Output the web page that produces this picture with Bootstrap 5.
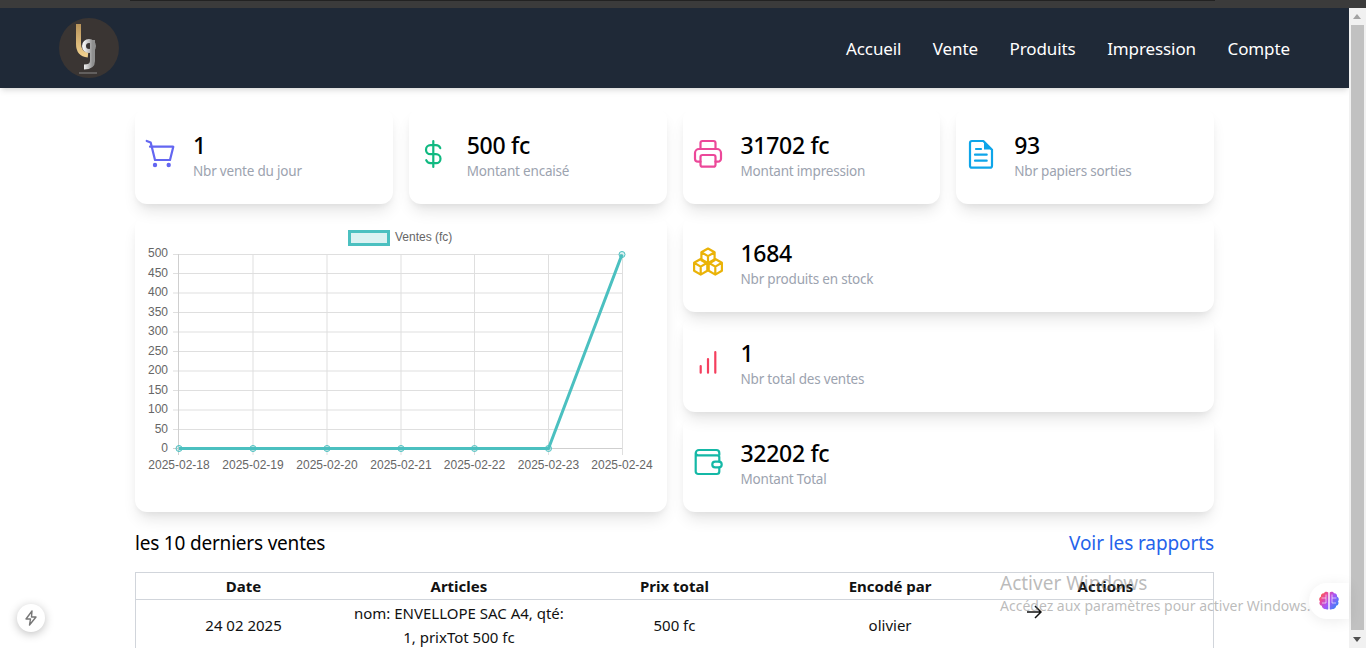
<!DOCTYPE html>
<html lang="fr">
<head>
    <meta charset="UTF-8">
    <meta name="viewport" content="width=device-width, initial-scale=1.0">
    <title>Tableau de bord</title>
    <link href="https://cdn.jsdelivr.net/npm/bootstrap@5.3.0/dist/css/bootstrap.min.css" rel="stylesheet">
    <style>
        html, body { height: 100%; overflow: hidden; }
        body { font-family: "Noto Sans", "Open Sans", sans-serif; color: #000; background: #fff; }
        .top-strip { height: 8px; background: #3b3b3b; }
        .top-strip div { height: 1px; margin: 0 151px 0 130px; background: #222; }
        .shell { height: 640px; }
        .page { width: 1349px; height: 640px; overflow: hidden; }
        .app-nav { height: 80px; padding: 0 59px; background: #1f2937; box-shadow: 0 4px 6px -1px rgba(0,0,0,.1), 0 2px 4px -2px rgba(0,0,0,.1); }
        .app-nav .navbar-brand { padding: 0; margin: 0; }
        .app-nav .nav-link { padding: 1px 0 0; font-size: 17px; letter-spacing: -.1px; line-height: 28px; color: #fff; }
        .app-nav .navbar-nav { gap: 31.5px; }
        .content { width: 1079px; margin: 20px auto 0; }
        .stat-card { height: 96px; padding-left: 10px; border: 0; border-radius: 12px; background: #fff; box-shadow: 0 10px 15px -3px rgba(0,0,0,.1), 0 4px 6px -2px rgba(0,0,0,.05); }
        .stat-card svg { flex: none; width: 30px; height: 30px; overflow: visible; }
        .stat-card svg * { fill: none; stroke-width: 2.2; stroke-linecap: round; stroke-linejoin: round; }
        .stat-card svg .solid { fill: currentColor; stroke: none; }
        .stat-text { margin-left: 18px; }
        .stat-num { font-size: 23px; letter-spacing: -.3px; line-height: 32px; font-weight: 500; margin-top: -2px; }
        .stat-label { font-size: 13.5px; letter-spacing: -.2px; line-height: 20px; color: #9ca3af; }
        /* upper cards keep their shadow over the card below */
        .row-top { position: relative; z-index: 4; margin-bottom: 12px; }
        .stack .stat-card { position: relative; }
        .stack .stat-card:nth-child(1) { z-index: 3; }
        .stack .stat-card:nth-child(2) { z-index: 2; }
        .stack .stat-card:nth-child(3) { z-index: 1; }
        .chart-card { height: 296px; border-radius: 12px; background: #fff; box-shadow: 0 10px 15px -3px rgba(0,0,0,.1), 0 4px 6px -2px rgba(0,0,0,.05); }
        .chart-card svg { display: block; }
        .chart-card text { font-family: "Liberation Sans", Arial, sans-serif; font-size: 12px; fill: #666; }
        .grid-line { stroke: #dfdfdf; stroke-width: 1; }
        .table-head { margin-top: 17px; height: 28px; margin-bottom: 15px; position: relative; }
        .table-head span { font-size: 19px; letter-spacing: -.2px; }
        .table-head a { font-size: 19px; letter-spacing: -.1px; color: #2563eb; text-decoration: none; }
        .sales { table-layout: fixed; width: 1079px; margin: 0; border: 1px solid #d1d5db; color: #111; }
        .sales th, .sales td { padding: 0 1px; text-align: center; vertical-align: middle; font-size: 15px; line-height: 24px; border: 0; }
        .sales th { height: 27px; font-weight: 700; border-bottom: 1px solid #d1d5db; }
        .sales td { height: 50px; }
        .sales td.action-cell { text-align: left; vertical-align: top; padding: 0 0 0 28px; }
        .action-cell svg { display: block; margin-top: 4px; }
        .scrollbar { width: 17px; height: 640px; background: #f1f1f1; padding: 0 2px; }
        .scrollbar .thumb { height: 605px; background: #c1c1c1; margin: 17px 0 0; }
        .arrow-up, .arrow-down { position: absolute; left: 4px; width: 0; height: 0; border-left: 4.5px solid transparent; border-right: 4.5px solid transparent; }
        .arrow-up { top: 6px; border-bottom: 5px solid #a3a3a3; }
        .arrow-down { bottom: 6px; border-top: 5px solid #505050; }
        .watermark { position: absolute; left: 1000px; top: 570px; color: rgba(120,120,120,.5); pointer-events: none; z-index: 5; }
        .watermark .big { font-size: 19px; line-height: 27px; }
        .watermark .small { font-size: 14px; line-height: 18px; white-space: nowrap; }
        .fab-left { position: absolute; left: 17px; top: 604px; width: 28px; height: 28px; background: #fff; box-shadow: 0 2px 10px rgba(0,0,0,.25); }
        .fab-right { position: absolute; left: 1309px; top: 583px; width: 40px; height: 36px; border-radius: 18px 0 0 18px; background: #fff; box-shadow: 0 2px 14px rgba(0,0,0,.08); z-index: 6; }
    </style>
</head>
<body class="position-relative">
    <div class="top-strip"><div></div></div>
    <div class="shell d-flex">
        <div class="page">
            <!-- Navigation -->
            <nav class="navbar app-nav flex-nowrap justify-content-between">
                <a class="navbar-brand" href="#">
                    <svg width="60" height="60" viewBox="0 0 60 60">
                        <defs>
                            <linearGradient id="gold" x1="0" y1="0" x2="0" y2="1"><stop offset="0" stop-color="#b8935a"/><stop offset="1" stop-color="#f0cf8c"/></linearGradient>
                            <linearGradient id="silver" x1="0" y1="0" x2="1" y2="0"><stop offset="0" stop-color="#f2f2f2"/><stop offset="1" stop-color="#8f8f8f"/></linearGradient>
                        </defs>
                        <circle cx="30" cy="30" r="30" fill="#3a3533"/>
                        <path d="M19.5 6V26Q19.5 36 29 37" fill="none" stroke="url(#gold)" stroke-width="5"/>
                        <circle cx="30" cy="28" r="5" fill="none" stroke="url(#silver)" stroke-width="4"/>
                        <path d="M33.5 22V43Q33.5 49 25 49" fill="none" stroke="url(#silver)" stroke-width="5"/>
                        <path d="M20 55H38" stroke="#8a8a8a" stroke-width="1"/>
                    </svg>
                </a>
                <ul class="navbar-nav flex-row">
                    <li class="nav-item"><a class="nav-link" href="#">Accueil</a></li>
                    <li class="nav-item"><a class="nav-link" href="#">Vente</a></li>
                    <li class="nav-item"><a class="nav-link" href="#">Produits</a></li>
                    <li class="nav-item"><a class="nav-link" href="#">Impression</a></li>
                    <li class="nav-item"><a class="nav-link" href="#">Compte</a></li>
                </ul>
            </nav>

            <div class="content">
                <!-- Top stats -->
                <div class="row g-3 row-top">
                    <div class="col-6">
                        <div class="row g-3">
                            <div class="col-6">
                                <div class="stat-card d-flex align-items-center">
                                    <svg viewBox="0 0 30 30">
                                        <path stroke="#6366f1" d="M1.7 0 5.7 1.5 10 19H25L28.3 5.7H5"/>
                                        <circle class="solid" color="#6366f1" cx="10" cy="24" r="2.2"/><circle class="solid" color="#6366f1" cx="23.7" cy="24" r="2.2"/>
                                    </svg>
                                    <div class="stat-text"><div class="stat-num">1</div><div class="stat-label">Nbr vente du jour</div></div>
                                </div>
                            </div>
                            <div class="col-6">
                                <div class="stat-card d-flex align-items-center">
                                    <svg viewBox="0 0 30 30">
                                        <path stroke="#10b981" d="M21.3 7.2C20.6 5.4 18.9 4.2 17 4.2H11.5C8.9 4.2 7 6.2 7 8.7S8.9 13.2 11.5 13.2H17C19.6 13.2 21.5 15.2 21.5 17.7S19.6 22.2 17 22.2H11.5C9.6 22.2 7.9 21 7.2 19.2M14.3 0V26"/>
                                    </svg>
                                    <div class="stat-text"><div class="stat-num">500 fc</div><div class="stat-label">Montant encaisé</div></div>
                                </div>
                            </div>
                        </div>
                    </div>
                    <div class="col-6">
                        <div class="row g-3">
                            <div class="col-6">
                                <div class="stat-card d-flex align-items-center">
                                    <svg viewBox="0 0 30 30">
                                        <path stroke="#ec4899" d="M7.5 8V2A2 2 0 0 1 9.5 0H20.5A2 2 0 0 1 22.5 2V8"/>
                                        <path stroke="#ec4899" d="M7.5 20.7H5A3 3 0 0 1 2 17.7V12A4 4 0 0 1 6 8H24A4 4 0 0 1 28 12V17.7A3 3 0 0 1 25 20.7H22.5"/>
                                        <rect stroke="#ec4899" x="7.5" y="14" width="15" height="11.7" rx="2"/>
                                    </svg>
                                    <div class="stat-text"><div class="stat-num">31702 fc</div><div class="stat-label">Montant impression</div></div>
                                </div>
                            </div>
                            <div class="col-6">
                                <div class="stat-card d-flex align-items-center">
                                    <svg viewBox="0 0 30 30">
                                        <path stroke="#0ea5e9" d="M17.3 0H6A2 2 0 0 0 4 2V24.7A2 2 0 0 0 6 26.7H24A2 2 0 0 0 26 24.7V8.7Z"/>
                                        <path class="solid" color="#0ea5e9" d="M18 1 25.4 8.4H18Z"/>
                                        <path stroke="#0ea5e9" d="M10 8H15M9 13.7H20.7M9 19.7H20.7"/>
                                    </svg>
                                    <div class="stat-text"><div class="stat-num">93</div><div class="stat-label">Nbr papiers sorties</div></div>
                                </div>
                            </div>
                        </div>
                    </div>
                </div>

                <!-- Chart and totals -->
                <div class="row g-3">
                    <div class="col-6">
                        <div class="chart-card">
                            <svg width="532" height="296" viewBox="135 216 532 296">
                                <g class="grid-line">
                                    <path d="M173 254.5H622M173 273.5H622M173 293H622M173 312.5H622M173 332H622M173 351.5H622M173 371H622M173 390.5H622M173 410H622M173 429.5H622"/>
                                    <path d="M253 254V455M327 254V455M401 254V455M474.5 254V455M548.5 254V455M622.5 254V455"/>
                                </g>
                                <path d="M178.5 254V455M173 448.5H622" stroke="#cfcfcf" fill="none"/>
                                <rect x="349.5" y="231.5" width="39" height="13" fill="rgba(75,192,192,.2)" stroke="#4bc0c0" stroke-width="3"/>
                                <text x="395" y="241">Ventes (fc)</text>
                                <g text-anchor="end">
                                    <text x="168" y="257">500</text><text x="168" y="277">450</text><text x="168" y="296">400</text><text x="168" y="316">350</text><text x="168" y="335">300</text>
                                    <text x="168" y="355">250</text><text x="168" y="374">200</text><text x="168" y="394">150</text><text x="168" y="413">100</text><text x="168" y="433">50</text><text x="168" y="452">0</text>
                                </g>
                                <g text-anchor="middle">
                                    <text x="179" y="469">2025-02-18</text><text x="253" y="469">2025-02-19</text><text x="327" y="469">2025-02-20</text><text x="401" y="469">2025-02-21</text>
                                    <text x="474.5" y="469">2025-02-22</text><text x="548.5" y="469">2025-02-23</text><text x="622" y="469">2025-02-24</text>
                                </g>
                                <path d="M179 448.5H548.5L622 254.5" fill="none" stroke="#4bc0c0" stroke-width="3"/>
                                <g fill="rgba(75,192,192,.2)" stroke="#4bc0c0">
                                    <circle cx="179" cy="448.5" r="3"/><circle cx="253" cy="448.5" r="3"/><circle cx="327" cy="448.5" r="3"/><circle cx="401" cy="448.5" r="3"/>
                                    <circle cx="474.5" cy="448.5" r="3"/><circle cx="548.5" cy="448.5" r="3"/><circle cx="622" cy="254.5" r="3"/>
                                </g>
                            </svg>
                        </div>
                    </div>
                    <div class="col-6 stack d-flex flex-column gap-1">
                        <div class="stat-card d-flex align-items-center">
                            <svg viewBox="0 0 30 30">
                                <defs>
                                    <g id="cube">
                                        <path d="M0 -8 6.6 -4.2V3.8L0 7.6 -6.6 3.8V-4.2ZM-6.6 -4.2 0 -.4 6.6 -4.2M0 -.4V7.6"/>
                                    </g>
                                </defs>
                                <use href="#cube" x="15" y="7.5" stroke="#eab308"/>
                                <use href="#cube" x="7.7" y="18" stroke="#eab308"/>
                                <use href="#cube" x="22.3" y="18" stroke="#eab308"/>
                            </svg>
                            <div class="stat-text"><div class="stat-num">1684</div><div class="stat-label">Nbr produits en stock</div></div>
                        </div>
                        <div class="stat-card d-flex align-items-center">
                            <svg viewBox="0 0 30 30">
                                <path stroke="#f43f5e" d="M7.7 23.7V17M15 23.7V10M22.3 23.7V3"/>
                            </svg>
                            <div class="stat-text"><div class="stat-num">1</div><div class="stat-label">Nbr total des ventes</div></div>
                        </div>
                        <div class="stat-card d-flex align-items-center">
                            <svg viewBox="0 0 30 30">
                                <path stroke="#14b8a6" d="M26.3 6V4A3 3 0 0 0 23.3 1H6A3.3 3.3 0 0 0 2.7 4.3V22.5A2.5 2.5 0 0 0 5.2 25H23.8A2.5 2.5 0 0 0 26.3 22.5V18.5M2.7 4.3A2.5 2.5 0 0 0 5.2 6.3H24.3A2 2 0 0 1 26.3 8.3V12.7"/>
                                <rect stroke="#14b8a6" x="19.3" y="12.7" width="9.4" height="5.6" rx="2.8"/>
                            </svg>
                            <div class="stat-text"><div class="stat-num">32202 fc</div><div class="stat-label">Montant Total</div></div>
                        </div>
                    </div>
                </div>

                <!-- Last sales -->
                <div class="table-head d-flex justify-content-between align-items-center">
                    <span>les 10 derniers ventes</span>
                    <a href="#">Voir les rapports</a>
                </div>
                <table class="table sales">
                    <thead>
                        <tr><th>Date</th><th>Articles</th><th>Prix total</th><th>Encodé par</th><th>Actions</th></tr>
                    </thead>
                    <tbody>
                        <tr>
                            <td>24 02 2025</td>
                            <td>nom: ENVELLOPE SAC A4, qté: 1, prixTot 500 fc</td>
                            <td>500 fc</td>
                            <td>olivier</td>
                            <td class="action-cell">
                                <svg width="16" height="16" viewBox="0 0 16 16" fill="none" stroke="#111" stroke-width="1.5"><path d="M1 8H15M9 2 15 8 9 14"/></svg>
                            </td>
                        </tr>
                    </tbody>
                </table>
            </div>
        </div>

        <!-- Browser scrollbar -->
        <div class="scrollbar position-relative">
            <div class="arrow-up"></div>
            <div class="thumb"></div>
            <div class="arrow-down"></div>
        </div>
    </div>

    <!-- Overlays -->
    <div class="watermark">
        <div class="big">Activer Windows</div>
        <div class="small">Accédez aux paramètres pour activer Windows.</div>
    </div>
    <div class="fab-left rounded-circle d-flex align-items-center justify-content-center">
        <svg width="14" height="16" viewBox="0 0 14 16" fill="none" stroke="#777" stroke-width="1.4" stroke-linejoin="round"><path d="M8 1 2 9H6.5L5.5 15 12 7H7.5Z"/></svg>
    </div>
    <div class="fab-right d-flex align-items-center justify-content-center">
        <svg width="22" height="20" viewBox="0 0 22 20">
            <defs><linearGradient id="brain" x1="0" y1="0" x2="1" y2=".7"><stop offset="0" stop-color="#f97316"/><stop offset=".3" stop-color="#ec4899"/><stop offset=".6" stop-color="#a855f7"/><stop offset="1" stop-color="#3b82f6"/></linearGradient></defs>
            <path fill="url(#brain)" d="M10.3 1.5C9 .3 6.8.6 6 2.2 4 2 2.6 3.6 3 5.4 1 6.3.6 8.9 2 10.2.8 12 1.8 14.4 3.8 14.8 3.9 17 6 18.6 8 18 9 18.8 10 18.6 10.3 18ZM11.7 1.5C13 .3 15.2.6 16 2.2 18 2 19.4 3.6 19 5.4 21 6.3 21.4 8.9 20 10.2 21.2 12 20.2 14.4 18.2 14.8 18.1 17 16 18.6 14 18 13 18.8 12 18.6 11.7 18Z"/>
            <path fill="none" stroke="#fff" stroke-opacity=".6" d="M3.5 7H8M8 3.5V12M4 12H8M14 3.5V12M14 7H18.5M14 12H18"/>
        </svg>
    </div>
</body>
</html>
